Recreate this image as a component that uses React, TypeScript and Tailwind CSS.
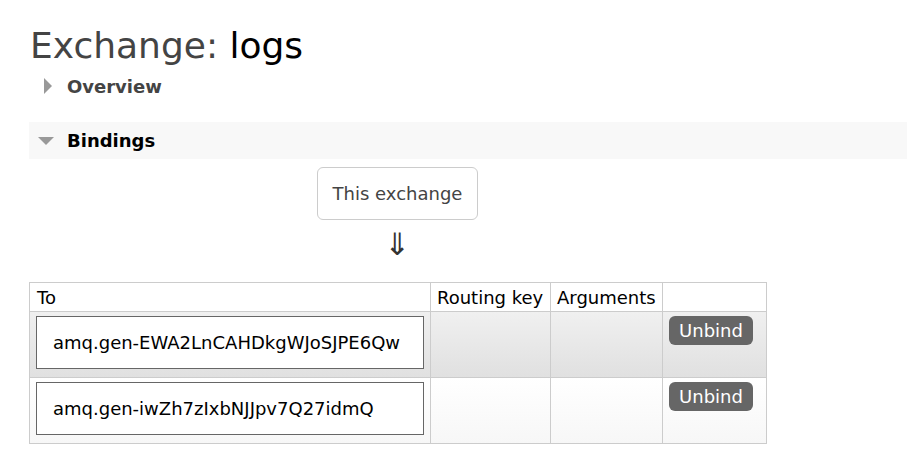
const rows = [
  { name: "amq.gen-EWA2LnCAHDkgWJoSJPE6Qw", bg: "bg-gradient-to-b from-[#f0f0f0] to-[#e0e0e0]" },
  { name: "amq.gen-iwZh7zIxbNJJpv7Q27idmQ", bg: "bg-gradient-to-b from-[#ffffff] to-[#f7f7f7]" },
];

export default function App() {
  return (
    <div className="min-h-screen bg-white pl-[29px] font-['DejaVu_Sans',sans-serif] text-[#444]">
      <h1 className="pt-[24px] text-[36px] leading-[44px] pl-px">
        Exchange: <span className="text-black">logs</span>
      </h1>

      <div className="mt-[4px] flex h-[28px] items-center pl-[15px]">
        <span className="h-0 w-0 border-y-[8px] border-l-[8px] border-y-transparent border-l-[#999]" />
        <span className="ml-[15px] text-[18px] font-bold">Overview</span>
      </div>

      <div className="mt-[22px] flex h-[37px] items-center bg-[#f8f8f8] pl-[9px]">
        <span className="h-0 w-0 border-x-[8px] border-t-[8px] border-x-transparent border-t-[#999]" />
        <span className="ml-[13px] text-[18px] font-bold text-black">Bindings</span>
      </div>

      <div className="ml-[288px] mt-[8px] flex w-[161px] flex-col items-center">
        <div className="flex h-[53px] w-full items-center justify-center rounded-[6px] border border-[#ccc] text-[18px]">
          This exchange
        </div>
        <div className="mt-[6px] text-[31px] leading-[36px] text-[#333]">⇓</div>
      </div>

      <table className="mt-[20px] border-collapse text-[18px] text-black">
        <thead>
          <tr className="h-[29px]">
            <th className="w-[401px] border border-[#ccc] px-[7px] text-left font-normal">To</th>
            <th className="w-[120px] border border-[#ccc] px-[6px] text-left font-normal">Routing key</th>
            <th className="w-[112px] border border-[#ccc] px-[6px] text-left font-normal">Arguments</th>
            <th className="w-[104px] border border-[#ccc]" />
          </tr>
        </thead>
        <tbody>
          {rows.map((r) => (
            <tr key={r.name} className={`h-[66px] ${r.bg}`}>
              <td className="border border-[#ccc] px-[6px] pt-[4px] align-top">
                <div className="flex h-[53px] w-[388px] items-center border border-[#666] bg-white pl-[16px]">
                  {r.name}
                </div>
              </td>
              <td className="border border-[#ccc]" />
              <td className="border border-[#ccc]" />
              <td className="border border-[#ccc] px-[6px] pt-[4px] align-top">
                <button className="flex h-[29px] w-[84px] items-center justify-center rounded-[6px] bg-[#666] text-[18px] text-white">
                  Unbind
                </button>
              </td>
            </tr>
          ))}
        </tbody>
      </table>
    </div>
  );
}
